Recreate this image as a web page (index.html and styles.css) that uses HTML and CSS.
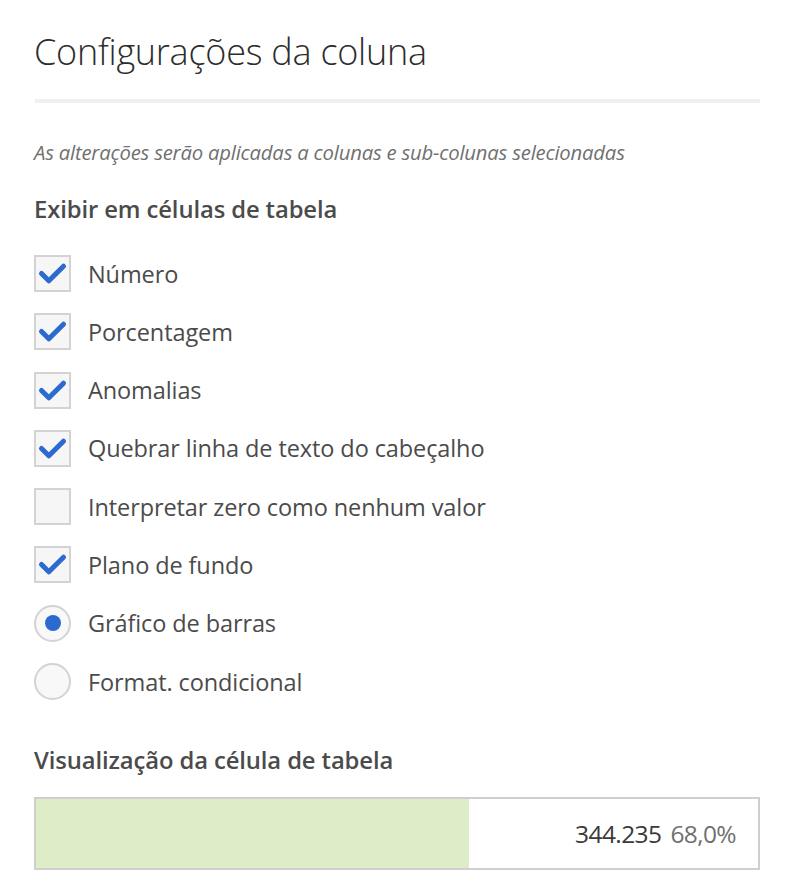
FILE: index.html
```html
<!DOCTYPE html>
<html lang="pt">
<head>
<meta charset="utf-8">
<link rel="stylesheet" href="styles.css">
</head>
<body>
<div class="panel">
  <h1 class="title">Configurações da coluna</h1>
  <div class="divider"></div>
  <p class="note">As alterações serão aplicadas a colunas e sub-colunas selecionadas</p>
  <h2 class="section">Exibir em células de tabela</h2>
  <ul class="options">
    <li class="option"><span class="box checked"><svg viewBox="0 0 36 36"><path d="M6 18 L14 26 L30 10" /></svg></span><span class="label">Número</span></li>
    <li class="option"><span class="box checked"><svg viewBox="0 0 36 36"><path d="M6 18 L14 26 L30 10" /></svg></span><span class="label">Porcentagem</span></li>
    <li class="option"><span class="box checked"><svg viewBox="0 0 36 36"><path d="M6 18 L14 26 L30 10" /></svg></span><span class="label">Anomalias</span></li>
    <li class="option"><span class="box checked"><svg viewBox="0 0 36 36"><path d="M6 18 L14 26 L30 10" /></svg></span><span class="label">Quebrar linha de texto do cabeçalho</span></li>
    <li class="option"><span class="box"></span><span class="label">Interpretar zero como nenhum valor</span></li>
    <li class="option"><span class="box checked"><svg viewBox="0 0 36 36"><path d="M6 18 L14 26 L30 10" /></svg></span><span class="label">Plano de fundo</span></li>
    <li class="option"><span class="radio selected"><span class="dot"></span></span><span class="label">Gráfico de barras</span></li>
    <li class="option"><span class="radio"></span><span class="label">Format. condicional</span></li>
  </ul>
  <h2 class="section preview-title">Visualização da célula de tabela</h2>
  <div class="preview">
    <div class="bar" style="width: 60%"></div>
    <div class="values"><span class="num">344.235</span><span class="pct">68,0%</span></div>
  </div>
</div>
</body>
</html>
```
FILE: styles.css
```css
html, body {
  margin: 0;
  padding: 0;
  background: #ffffff;
}
body {
  font-family: "Open Sans", "Noto Sans", sans-serif;
  color: #4b4b4b;
}
.panel {
  padding: 24px 32px 0 34px;
}
.title {
  margin: 0;
  font-weight: 300;
  font-size: 36px;
  line-height: 56px;
  color: #2c2c2c;
  letter-spacing: -0.25px;
}
.divider {
  height: 4px;
  background: #f0f0f0;
  margin: 19px 0 0 1px;
}
.note {
  margin: 36px 0 0;
  font-style: italic;
  font-size: 20.3px;
  line-height: 26px;
  color: #707070;
  letter-spacing: -0.2px;
}
.section {
  margin: 29px 0 0;
  font-size: 23.8px;
  font-weight: 600;
  line-height: 30px;
  color: #4b4b4b;
  letter-spacing: -0.1px;
}
.options {
  list-style: none;
  margin: 31px 0 0;
  padding: 0;
  display: flex;
  flex-direction: column;
  gap: 21.3px;
}
.option {
  display: flex;
  align-items: center;
  gap: 17px;
  height: 37px;
}
.box {
  box-sizing: border-box;
  width: 37px;
  height: 37px;
  border: 2px solid #d3d3d3;
  background: #f6f6f6;
  display: flex;
  align-items: center;
  justify-content: center;
  flex: none;
}
.box svg {
  width: 33px;
  height: 33px;
}
.box svg path {
  fill: none;
  stroke: #2c6ad0;
  stroke-width: 5.5;
  stroke-linecap: round;
  stroke-linejoin: round;
}
.radio {
  box-sizing: border-box;
  width: 37px;
  height: 37px;
  border-radius: 50%;
  border: 2px solid #d3d3d3;
  background: #f8f8f8;
  display: flex;
  align-items: center;
  justify-content: center;
  flex: none;
}
.dot {
  width: 16px;
  height: 16px;
  border-radius: 50%;
  background: #2c6ad0;
}
.label {
  font-size: 23.5px;
  color: #4b4b4b;
  letter-spacing: -0.1px;
}
.preview-title {
  margin-top: 45px;
}
.preview {
  margin-top: 22px;
  box-sizing: border-box;
  height: 73px;
  border: 2px solid #cfcfcf;
  display: flex;
  align-items: center;
}
.bar {
  align-self: stretch;
  background: #dcedc8;
}
.values {
  margin-left: auto;
  padding-right: 22px;
  font-size: 24.5px;
  display: flex;
  gap: 9px;
}
.num {
  color: #3a3a3a;
  letter-spacing: -0.6px;
}
.pct {
  color: #707070;
  letter-spacing: -0.6px;
}
```
